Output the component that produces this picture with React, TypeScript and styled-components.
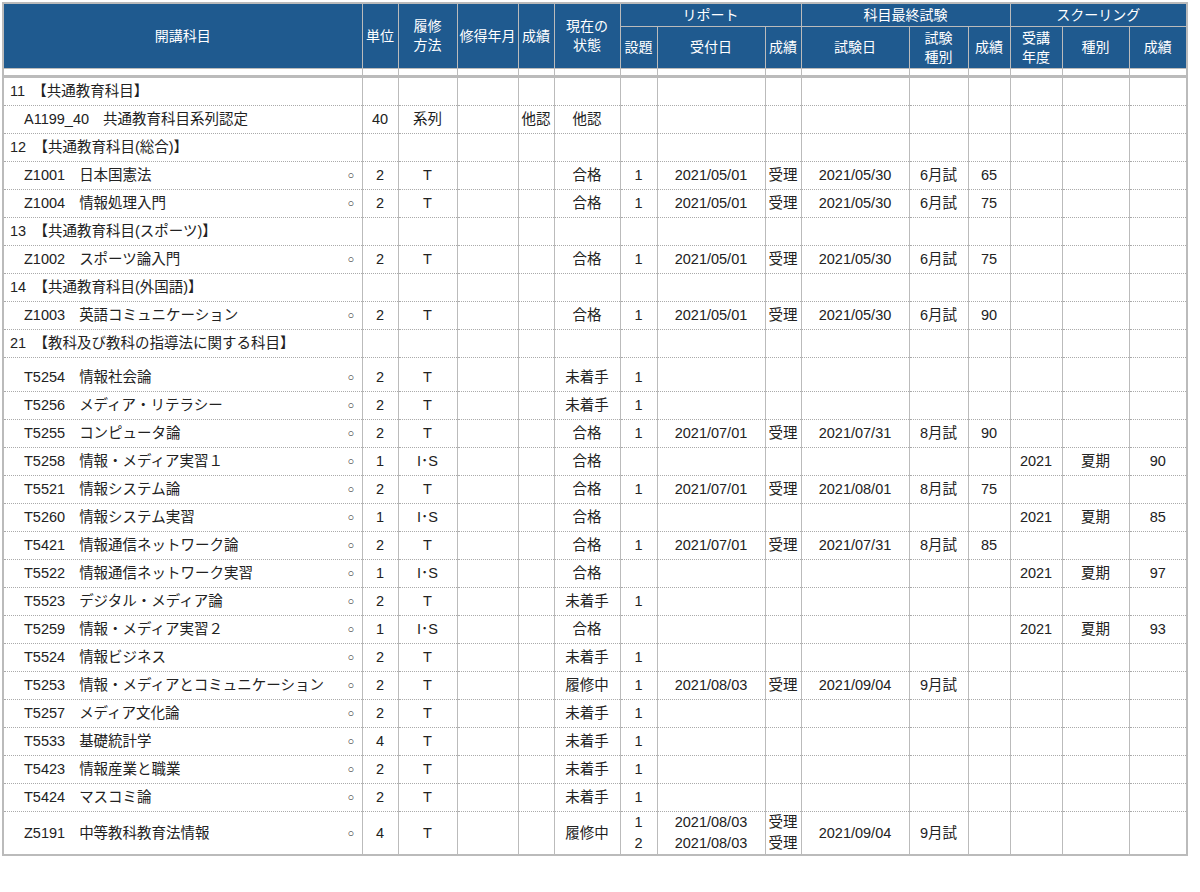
import React from "react";
import styled, { createGlobalStyle } from "styled-components";

const Global = createGlobalStyle`
  body { margin: 0; background: #fff; font-family: "Liberation Sans", "Noto Sans CJK JP", sans-serif; }
`;

const Wrap = styled.div`
  padding: 2px 0 0 2px;
`;

const Table = styled.table`
  border-collapse: collapse;
  table-layout: fixed;
  width: 1185px;
  font-size: 14.5px;
  color: #222;
  border: 2px solid #bbb;
`;

const Th = styled.th<{ h?: number }>`
  background: #1f5a8f;
  color: #fff;
  font-weight: normal;
  font-size: 14px;
  border: 1px solid #bbb;
  padding: 0;
  line-height: 19px;
  white-space: nowrap;
  height: ${(p) => p.h ?? 22}px;
`;

const Td = styled.td<{ align?: string; thick?: boolean }>`
  border-left: 1px solid #bbb;
  border-right: 1px solid #bbb;
  border-bottom: 1px dotted #aaa;
  ${(p) => (p.thick ? "border-top: 3px solid #bbb;" : "")}
  text-align: ${(p) => p.align ?? "center"};
  padding: 0;
  height: 27px;
  line-height: 21px;
  white-space: nowrap;
  vertical-align: middle;
`;

const GapTd = styled.td`
  border-left: 1px solid #bbb;
  border-right: 1px solid #bbb;
  height: 6px;
  padding: 0;
`;

const NameCell = styled.div`
  display: flex;
  align-items: center;
  padding-left: 4px;
  white-space: normal;
`;

const Name = styled.span`
  flex: 1;
  max-width: 318px;
  text-indent: 16px;
`;

const Code = styled.span`
  margin-right: 14px;
`;

const Mark = styled.span`
  font-size: 11px;
  width: 10px;
  margin-left: auto;
  margin-right: 4px;
`;

const Cat = styled.span`
  padding-left: 6px;
`;

type Row =
  | { cat: string }
  | { gap: true }
  | {
      code: string; name: string; mark?: boolean; u: string; m: string; g?: string; st: string;
      q?: string[]; rd?: string[]; rs?: string[]; ed?: string; et?: string; es?: string;
      sy?: string; sk?: string; ss?: string;
    };

const rep = { q: ["1"], rd: ["2021/05/01"], rs: ["受理"], ed: "2021/05/30", et: "6月試" };

const rows: Row[] = [
  { cat: "11　【共通教育科目】" },
  { code: "A1199_40", name: "共通教育科目系列認定", u: "40", m: "系列", g: "他認", st: "他認" },
  { cat: "12　【共通教育科目(総合)】" },
  { code: "Z1001", name: "日本国憲法", mark: true, u: "2", m: "T", st: "合格", ...rep, es: "65" },
  { code: "Z1004", name: "情報処理入門", mark: true, u: "2", m: "T", st: "合格", ...rep, es: "75" },
  { cat: "13　【共通教育科目(スポーツ)】" },
  { code: "Z1002", name: "スポーツ論入門", mark: true, u: "2", m: "T", st: "合格", ...rep, es: "75" },
  { cat: "14　【共通教育科目(外国語)】" },
  { code: "Z1003", name: "英語コミュニケーション", mark: true, u: "2", m: "T", st: "合格", ...rep, es: "90" },
  { cat: "21　【教科及び教科の指導法に関する科目】" },
  { gap: true },
  { code: "T5254", name: "情報社会論", mark: true, u: "2", m: "T", st: "未着手", q: ["1"] },
  { code: "T5256", name: "メディア・リテラシー", mark: true, u: "2", m: "T", st: "未着手", q: ["1"] },
  { code: "T5255", name: "コンピュータ論", mark: true, u: "2", m: "T", st: "合格", q: ["1"], rd: ["2021/07/01"], rs: ["受理"], ed: "2021/07/31", et: "8月試", es: "90" },
  { code: "T5258", name: "情報・メディア実習１", mark: true, u: "1", m: "I･S", st: "合格", sy: "2021", sk: "夏期", ss: "90" },
  { code: "T5521", name: "情報システム論", mark: true, u: "2", m: "T", st: "合格", q: ["1"], rd: ["2021/07/01"], rs: ["受理"], ed: "2021/08/01", et: "8月試", es: "75" },
  { code: "T5260", name: "情報システム実習", mark: true, u: "1", m: "I･S", st: "合格", sy: "2021", sk: "夏期", ss: "85" },
  { code: "T5421", name: "情報通信ネットワーク論", mark: true, u: "2", m: "T", st: "合格", q: ["1"], rd: ["2021/07/01"], rs: ["受理"], ed: "2021/07/31", et: "8月試", es: "85" },
  { code: "T5522", name: "情報通信ネットワーク実習", mark: true, u: "1", m: "I･S", st: "合格", sy: "2021", sk: "夏期", ss: "97" },
  { code: "T5523", name: "デジタル・メディア論", mark: true, u: "2", m: "T", st: "未着手", q: ["1"] },
  { code: "T5259", name: "情報・メディア実習２", mark: true, u: "1", m: "I･S", st: "合格", sy: "2021", sk: "夏期", ss: "93" },
  { code: "T5524", name: "情報ビジネス", mark: true, u: "2", m: "T", st: "未着手", q: ["1"] },
  { code: "T5253", name: "情報・メディアとコミュニケーション", mark: true, u: "2", m: "T", st: "履修中", q: ["1"], rd: ["2021/08/03"], rs: ["受理"], ed: "2021/09/04", et: "9月試" },
  { code: "T5257", name: "メディア文化論", mark: true, u: "2", m: "T", st: "未着手", q: ["1"] },
  { code: "T5533", name: "基礎統計学", mark: true, u: "4", m: "T", st: "未着手", q: ["1"] },
  { code: "T5423", name: "情報産業と職業", mark: true, u: "2", m: "T", st: "未着手", q: ["1"] },
  { code: "T5424", name: "マスコミ論", mark: true, u: "2", m: "T", st: "未着手", q: ["1"] },
  { code: "Z5191", name: "中等教科教育法情報", mark: true, u: "4", m: "T", st: "履修中", q: ["1", "2"], rd: ["2021/08/03", "2021/08/03"], rs: ["受理", "受理"], ed: "2021/09/04", et: "9月試" },
];

const widths = [359, 36, 59, 61, 36, 66, 37, 108, 36, 108, 59, 42, 52, 67, 58];

const Lines = ({ v }: { v?: string[] }) => <>{v?.map((s, i) => <div key={i}>{s}</div>)}</>;

export default function App() {
  return (
    <Wrap>
      <Global />
      <Table>
        <colgroup>
          {widths.map((w, i) => <col key={i} style={{ width: w }} />)}
        </colgroup>
        <thead>
          <tr>
            <Th rowSpan={2}>開講科目</Th>
            <Th rowSpan={2}>単位</Th>
            <Th rowSpan={2}>履修<br />方法</Th>
            <Th rowSpan={2}>修得年月</Th>
            <Th rowSpan={2}>成績</Th>
            <Th rowSpan={2}>現在の<br />状態</Th>
            <Th colSpan={3}>リポート</Th>
            <Th colSpan={3}>科目最終試験</Th>
            <Th colSpan={3}>スクーリング</Th>
          </tr>
          <tr>
            <Th h={41}>設題</Th>
            <Th h={41}>受付日</Th>
            <Th h={41}>成績</Th>
            <Th h={41}>試験日</Th>
            <Th h={41}>試験<br />種別</Th>
            <Th h={41}>成績</Th>
            <Th h={41}>受講<br />年度</Th>
            <Th h={41}>種別</Th>
            <Th h={41}>成績</Th>
          </tr>
        </thead>
        <tbody>
          <tr>{widths.map((_, i) => <GapTd key={i} />)}</tr>
          {rows.map((r, i) => {
            if ("gap" in r) return <tr key={i}>{widths.map((_, j) => <GapTd key={j} />)}</tr>;
            const thick = i === 0;
            if ("cat" in r)
              return (
                <tr key={i}>
                  <Td align="left" thick={thick}><Cat>{r.cat}</Cat></Td>
                  {widths.slice(1).map((_, j) => <Td key={j} thick={thick} />)}
                </tr>
              );
            return (
              <tr key={i}>
                <Td align="left">
                  <NameCell>
                    <Name><Code>{r.code}</Code>{r.name}</Name>
                    <Mark>{r.mark ? "○" : ""}</Mark>
                  </NameCell>
                </Td>
                <Td>{r.u}</Td>
                <Td>{r.m}</Td>
                <Td />
                <Td>{r.g}</Td>
                <Td>{r.st}</Td>
                <Td><Lines v={r.q} /></Td>
                <Td><Lines v={r.rd} /></Td>
                <Td><Lines v={r.rs} /></Td>
                <Td>{r.ed}</Td>
                <Td>{r.et}</Td>
                <Td>{r.es}</Td>
                <Td>{r.sy}</Td>
                <Td>{r.sk}</Td>
                <Td>{r.ss}</Td>
              </tr>
            );
          })}
        </tbody>
      </Table>
    </Wrap>
  );
}
